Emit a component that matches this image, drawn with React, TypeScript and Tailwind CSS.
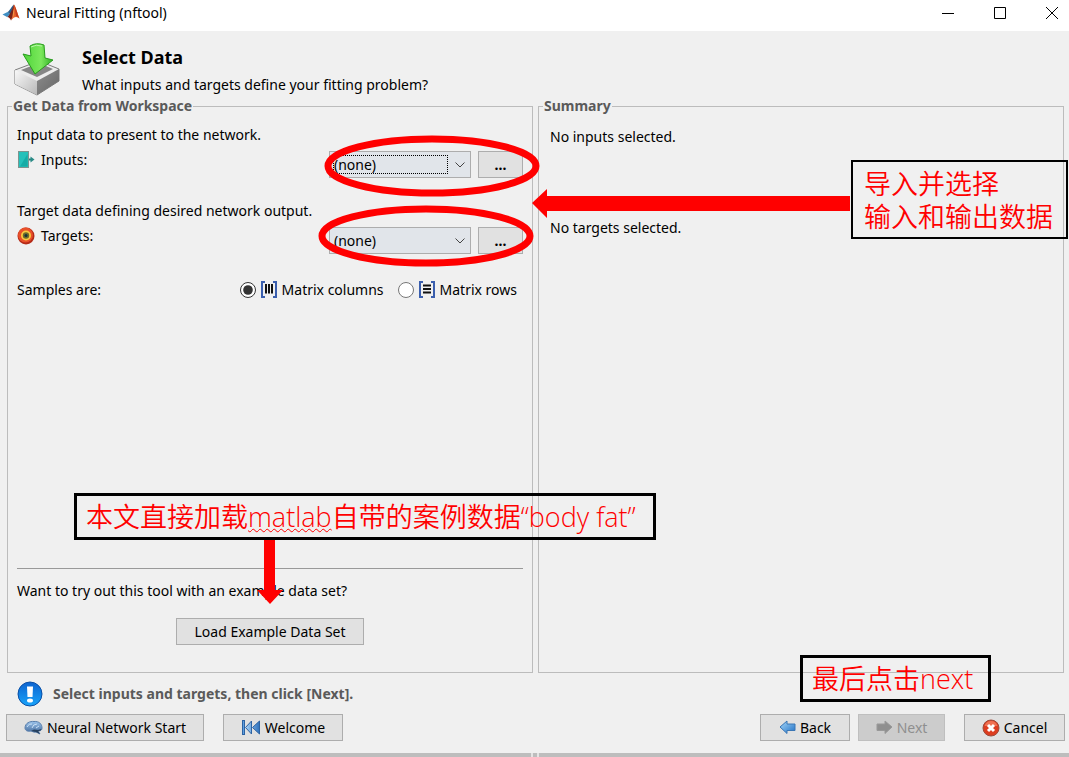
import { useState, type ReactNode } from "react";

const MatlabIcon = () => (
  <svg viewBox="0 0 18 18" className="size-[18px]" aria-hidden="true">
    <path d="M0.500 10.500 L5.500 8 L8.500 10.500 L5 13 Z" fill="#3f8fc4" />
    <path d="M5.500 8 C8 7 9.500 2 12 0.500 L9 11 Z" fill="#2b5f8c" />
    <path d="M5 13 C7.500 12 9.500 7 12 0.500 L12.500 9 L9 16.500 C8 14.500 7 13 5 13 Z" fill="#7c2216" />
    <path d="M12 0.500 C13.500 1.500 15.500 10 17.500 14.500 C14.500 12 12 12.500 9 16.500 C11 12 11.500 7 12 0.500 Z" fill="#e8622c" />
    <path d="M12 1 C13 4 13.500 9 14 12 C15.500 12.500 16.500 13.500 17.500 14.500 C15.500 10 13.500 2 12 1 Z" fill="#c43c1c" />
    <path d="M11.500 5 C12 8 12 11 11 13.500 C10.500 11 11 8 11.500 5 Z" fill="#f5a04c" />
  </svg>
);

const ImportIcon = () => (
  <svg viewBox="0 0 48 54" className="h-[54px] w-12" aria-hidden="true">
    <defs>
      <linearGradient id="trayLeft" x1="0" y1="0" x2="1" y2="1">
        <stop offset="0" stopColor="#f8f8f8" />
        <stop offset="1" stopColor="#b9b9b9" />
      </linearGradient>
      <linearGradient id="trayRight" x1="0" y1="0" x2="1" y2="1">
        <stop offset="0" stopColor="#8d8d8d" />
        <stop offset="1" stopColor="#666" />
      </linearGradient>
      <linearGradient id="greenArrow" x1="0" y1="0" x2="1" y2="0">
        <stop offset="0" stopColor="#4fd43a" />
        <stop offset="0.600" stopColor="#7be85c" />
        <stop offset="1" stopColor="#2fae22" />
      </linearGradient>
    </defs>
    <path d="M1 27 L25 18 L45 26 L45 38 L23 52 L1 41 Z" fill="#ececec" stroke="#7d7d7d" />
    <path d="M1 27 L23 38 L23 52 L1 41 Z" fill="url(#trayLeft)" />
    <path d="M45 26 L23 38 L23 52 L45 38 Z" fill="url(#trayRight)" />
    <path d="M7 27 L25 20 L39 26 L23 34 Z" fill="#858585" />
    <path d="M16 3 Q22 -1 30 2 L31 15 L39 17 L21 31 L9 11 L17 13 Z" fill="url(#greenArrow)" stroke="#289c1d" />
    <path d="M17 4 Q22 1 28 3" stroke="#b5f5a5" fill="none" />
  </svg>
);

const InputsIcon = () => (
  <svg viewBox="0 0 18 18" className="size-[18px]" aria-hidden="true">
    <rect x="1.500" y="0.500" width="10" height="16" fill="#25c1ba" stroke="#7d948f" />
    <path d="M3 15.500 L10.500 3 V15.500 Z" fill="#17aca6" />
    <path d="M12 8.500 H15" stroke="#1f8480" strokeWidth="2" />
    <path d="M13.500 5.500 L17.500 8.500 L13.500 11.500 Z" fill="#2a8a86" />
  </svg>
);

const TargetsIcon = () => (
  <svg viewBox="0 0 18 18" className="size-[18px]" aria-hidden="true">
    <circle cx="9" cy="9" r="8.500" fill="#b52a17" />
    <circle cx="8.500" cy="8" r="7.500" fill="#e8502a" />
    <circle cx="9" cy="8.500" r="5" fill="#f8c93e" />
    <circle cx="9" cy="8.500" r="3.200" fill="#6d6a2a" />
    <circle cx="9" cy="8.500" r="1.500" fill="#12333b" />
  </svg>
);

const MatrixIcon = ({ rows }: { rows?: boolean }) => (
  <svg viewBox="0 0 18 18" className="size-[18px]" fill="none" aria-hidden="true">
    <path d="M5 1 H2 V16 H5 M13 1 H16 V16 H13" stroke="#3b5fae" strokeWidth="2" />
    <path d={rows ? "M5 4.500 H13 M5 8 H13 M5 11.500 H13" : "M6 3 V12.500 M9 3 V12.500 M12 3 V12.500"} stroke="#111" strokeWidth="2" />
  </svg>
);

const InfoIcon = () => (
  <svg viewBox="0 0 26 26" className="size-[26px]" aria-hidden="true">
    <defs>
      <linearGradient id="infoBlue" x1="0" y1="0" x2="0" y2="1">
        <stop offset="0" stopColor="#0d63cf" />
        <stop offset="1" stopColor="#19a4fa" />
      </linearGradient>
    </defs>
    <circle cx="13" cy="13" r="12" fill="url(#infoBlue)" stroke="#0b4fa5" />
    <path d="M10 5.500 H16 L15.500 16 H10.500 Z" fill="#fff" />
    <ellipse cx="13" cy="19.500" rx="3" ry="2" fill="#fff" />
  </svg>
);

const BrainIcon = () => (
  <svg viewBox="0 0 19 16" className="h-4 w-[19px]" aria-hidden="true">
    <defs>
      <linearGradient id="brain" x1="0" y1="0" x2="0" y2="1">
        <stop offset="0" stopColor="#9cc3ea" />
        <stop offset="1" stopColor="#3c6396" />
      </linearGradient>
    </defs>
    <path d="M1 8 C1 3 6 1 10 1.500 C15 1 18 4 18 8 C18 11 15 11 14 11 L16 14 L12 12 C10 13 8 11 7 11 C3 12 1 10 1 8 Z" fill="url(#brain)" stroke="#5b80ad" />
    <path d="M7 11 L10 9.500 L14 10 L17.500 9 C17 11 15 11 14 11 L16 14 L12 12 Z" fill="#27415f" />
    <path d="M3 7 Q5 3 8 4 M8 8 Q9 4 13 4 M12 8 L15 6" stroke="#c9e0f6" fill="none" />
  </svg>
);

const RewindIcon = () => (
  <svg viewBox="0 0 20 16" className="h-4 w-5" aria-hidden="true">
    <defs>
      <linearGradient id="rewind" x1="0" y1="0" x2="1" y2="0">
        <stop offset="0" stopColor="#a9d3f8" />
        <stop offset="1" stopColor="#2f72bd" />
      </linearGradient>
    </defs>
    <rect x="1.500" y="0.500" width="2" height="14" fill="#5e9fe0" stroke="#2d63a3" />
    <path d="M10.500 1 V14 L4.500 7.500 Z M18.500 1 V14 L11.500 7.500 Z" fill="url(#rewind)" stroke="#2d63a3" />
  </svg>
);

const BackIcon = () => (
  <svg viewBox="0 0 17 16" className="h-4 w-[17px]" aria-hidden="true">
    <defs>
      <linearGradient id="back" x1="0" y1="0" x2="1" y2="1">
        <stop offset="0" stopColor="#a9dafa" />
        <stop offset="1" stopColor="#1f6fc4" />
      </linearGradient>
    </defs>
    <path d="M1 7 L8 1 V4 H16 V10.500 H8 V13.500 Z" fill="url(#back)" stroke="#3a76b5" />
  </svg>
);

const NextIcon = () => (
  <svg viewBox="0 0 17 16" className="h-4 w-[17px]" aria-hidden="true">
    <path d="M16 7 L9 1 V4 H1 V10.500 H9 V13.500 Z" fill="#8f8f8f" stroke="#999" />
  </svg>
);

const CancelIcon = () => (
  <svg viewBox="0 0 18 18" className="size-[18px]" aria-hidden="true">
    <circle cx="9" cy="9" r="8" fill="#dc3d20" stroke="#9c4a3a" />
    <path d="M2.500 7 Q4 2 9 2 Q14 2 15.500 7 Z" fill="#ef7152" />
    <path d="M6 6 L12 12 M12 6 L6 12" stroke="#fff" strokeWidth="3" />
  </svg>
);

const PushButton = ({ className, disabled, children }: { className: string; disabled?: boolean; children: ReactNode }) => (
  <button
    type="button"
    disabled={disabled}
    className={`flex h-[27px] items-center justify-center gap-1 border border-[#adadad] bg-[#e1e1e1] whitespace-nowrap disabled:border-[#bfbfbf] disabled:bg-[#cccccc] disabled:text-[#8f8f8f] ${className}`}
  >
    {children}
  </button>
);

const VariableRow = ({ id, label, icon, focused }: { id: string; label: string; icon: ReactNode; focused?: boolean }) => (
  <div className="flex h-7 items-start justify-between">
    <label htmlFor={id} className="flex h-5 items-center gap-[6px]">
      {icon}
      {label}
    </label>
    <div className="flex h-7 items-end gap-[7px]">
      <div className="relative">
        <select id={id} className="block h-[27px] w-[142px] appearance-none border border-[#adadad] bg-[#e1e5ea] pl-1 outline-none">
          <option>(none)</option>
        </select>
        {focused && <span className="pointer-events-none absolute top-1 left-1 h-[19px] w-[115px] border border-dotted border-black" />}
        <svg viewBox="0 0 10 6" className="pointer-events-none absolute top-[11px] right-[6px] h-[6px] w-[10px]" fill="none" aria-hidden="true">
          <path d="M0.500 0.500 L5 5 L9.500 0.500" stroke="#444" />
        </svg>
      </div>
      <PushButton className="w-[45px] font-bold">...</PushButton>
    </div>
  </div>
);

const GroupBox = ({ title, className, children }: { title: string; className?: string; children: ReactNode }) => (
  <fieldset className="flex min-w-0 flex-1 flex-col border border-[#bcbcbc]">
    <legend className="ml-1 px-px leading-5 font-bold text-[#5a5a5a]">{title}</legend>
    <div className={`flex flex-1 flex-col ${className}`}>{children}</div>
  </fieldset>
);

const note = "absolute border-black text-[27px] whitespace-nowrap text-[#f00] font-[350] font-['Open_Sans','Noto_Sans_CJK_SC',sans-serif]";

const Annotations = () => (
  <div className="pointer-events-none absolute inset-0">
    <svg viewBox="0 0 1069 757" className="absolute top-0 left-0 h-[757px] w-[1069px]" aria-hidden="true">
      <ellipse cx="432" cy="166" rx="104" ry="27" fill="none" stroke="#f00" strokeWidth="7" />
      <ellipse cx="426" cy="236" rx="104" ry="27" fill="none" stroke="#f00" strokeWidth="7" />
      <path d="M850 196 H547 V189 L532 203 L547 218 V211 H850 Z" fill="#f00" />
      <path d="M264 540 V590 H257 L270 604 L283 590 H275 V540 Z" fill="#f00" />
    </svg>
    <div className={`${note} top-[160px] left-[851px] h-[79px] w-[217px] border-2 pt-[5px] pl-[11px] leading-[33px]`}>
      <p>导入并选择</p>
      <p>输入和输出数据</p>
    </div>
    <p className={`${note} top-[493px] left-[74px] h-[47px] w-[582px] border-[3px] pl-[9px] leading-[42px]`}>
      本文直接加载<span className="underline decoration-wavy decoration-1">matlab</span>自带的案例数据“body fat”
    </p>
    <p className={`${note} top-[655px] left-[800px] h-[47px] w-[191px] border-[3px] pl-[9px] leading-[42px]`}>最后点击next</p>
  </div>
);

export default function App() {
  const [samples, setSamples] = useState("columns");

  return (
    <div className="relative flex min-h-screen flex-col bg-[#f0f0f0] font-['Noto_Sans',sans-serif] text-[14px] leading-5 text-black">
      <header className="flex h-[31px] items-center bg-white pr-[11px] pb-[5px] pl-[2px]">
        <MatlabIcon />
        <h1 className="ml-[6px] flex-1">Neural Fitting (nftool)</h1>
        <div className="flex items-center gap-10">
          <button type="button" aria-label="Minimize">
            <svg viewBox="0 0 12 12" className="size-3"><path d="M0 6.500 H12" stroke="#000" /></svg>
          </button>
          <button type="button" aria-label="Maximize">
            <svg viewBox="0 0 12 12" className="size-3"><path d="M0.500 0.500 H11.500 V11.500 H0.500 Z" stroke="#000" fill="none" /></svg>
          </button>
          <button type="button" aria-label="Close">
            <svg viewBox="0 0 12 12" className="size-3"><path d="M0 0 L12 12 M12 0 L0 12" stroke="#000" /></svg>
          </button>
        </div>
      </header>

      <section className="flex h-[65px] items-start gap-5 pt-3 pl-[14px]">
        <ImportIcon />
        <div>
          <h2 className="text-[18px] leading-7 font-bold">Select Data</h2>
          <p className="leading-7">What inputs and targets define your fitting problem?</p>
        </div>
      </section>

      <main className="flex flex-1 gap-[5px] pr-[5px] pl-[7px]">
        <GroupBox title="Get Data from Workspace" className="pt-[9px] pr-[9px] pb-[27px] pl-[9px]">
          <p>Input data to present to the network.</p>
          <div className="pt-[5px]">
            <VariableRow id="inputs" label="Inputs:" icon={<InputsIcon />} focused />
          </div>
          <p className="pt-[23px]">Target data defining desired network output.</p>
          <div className="pt-[5px]">
            <VariableRow id="targets" label="Targets:" icon={<TargetsIcon />} />
          </div>
          <div className="flex items-center justify-between pt-[26px] pr-[6px]">
            <span>Samples are:</span>
            <div className="flex gap-[14px]">
              <label className="flex items-center gap-1">
                <input type="radio" name="samples" checked={samples === "columns"} onChange={() => setSamples("columns")} className="size-4 accent-[#333]" />
                <MatrixIcon />
                Matrix columns
              </label>
              <label className="flex items-center gap-1">
                <input type="radio" name="samples" checked={samples === "rows"} onChange={() => setSamples("rows")} className="size-4 accent-[#333]" />
                <MatrixIcon rows />
                Matrix rows
              </label>
            </div>
          </div>
          <div className="mt-auto flex flex-col border-t border-[#999] pt-3">
            <p>Want to try out this tool with an example data set?</p>
            <PushButton className="mt-[17px] w-[188px] self-center">Load Example Data Set</PushButton>
          </div>
        </GroupBox>
        <GroupBox title="Summary" className="gap-[71px] pt-[11px] pl-[11px]">
          <p>No inputs selected.</p>
          <p>No targets selected.</p>
        </GroupBox>
      </main>

      <footer>
        <p className="flex h-[41px] items-center gap-[10px] pl-[17px] font-bold text-[#5a5a5a]">
          <InfoIcon />
          Select inputs and targets, then click [Next].
        </p>
        <div className="flex pr-1 pb-3 pl-[6px]">
          <PushButton className="w-[198px]"><BrainIcon />Neural Network Start</PushButton>
          <PushButton className="ml-[19px] w-[120px]"><RewindIcon />Welcome</PushButton>
          <PushButton className="ml-auto w-[90px]"><BackIcon />Back</PushButton>
          <PushButton className="ml-2 w-[87px]" disabled><NextIcon />Next</PushButton>
          <PushButton className="ml-[19px] w-[101px]"><CancelIcon />Cancel</PushButton>
        </div>
        <div className="flex h-1 gap-[2px] bg-[#e4e4e4]">
          <div className="flex-1 bg-[#bdbdbd]" />
          <div className="w-1 bg-[#bdbdbd]" />
          <div className="flex-1 bg-[#bdbdbd]" />
        </div>
      </footer>

      <Annotations />
    </div>
  );
}
